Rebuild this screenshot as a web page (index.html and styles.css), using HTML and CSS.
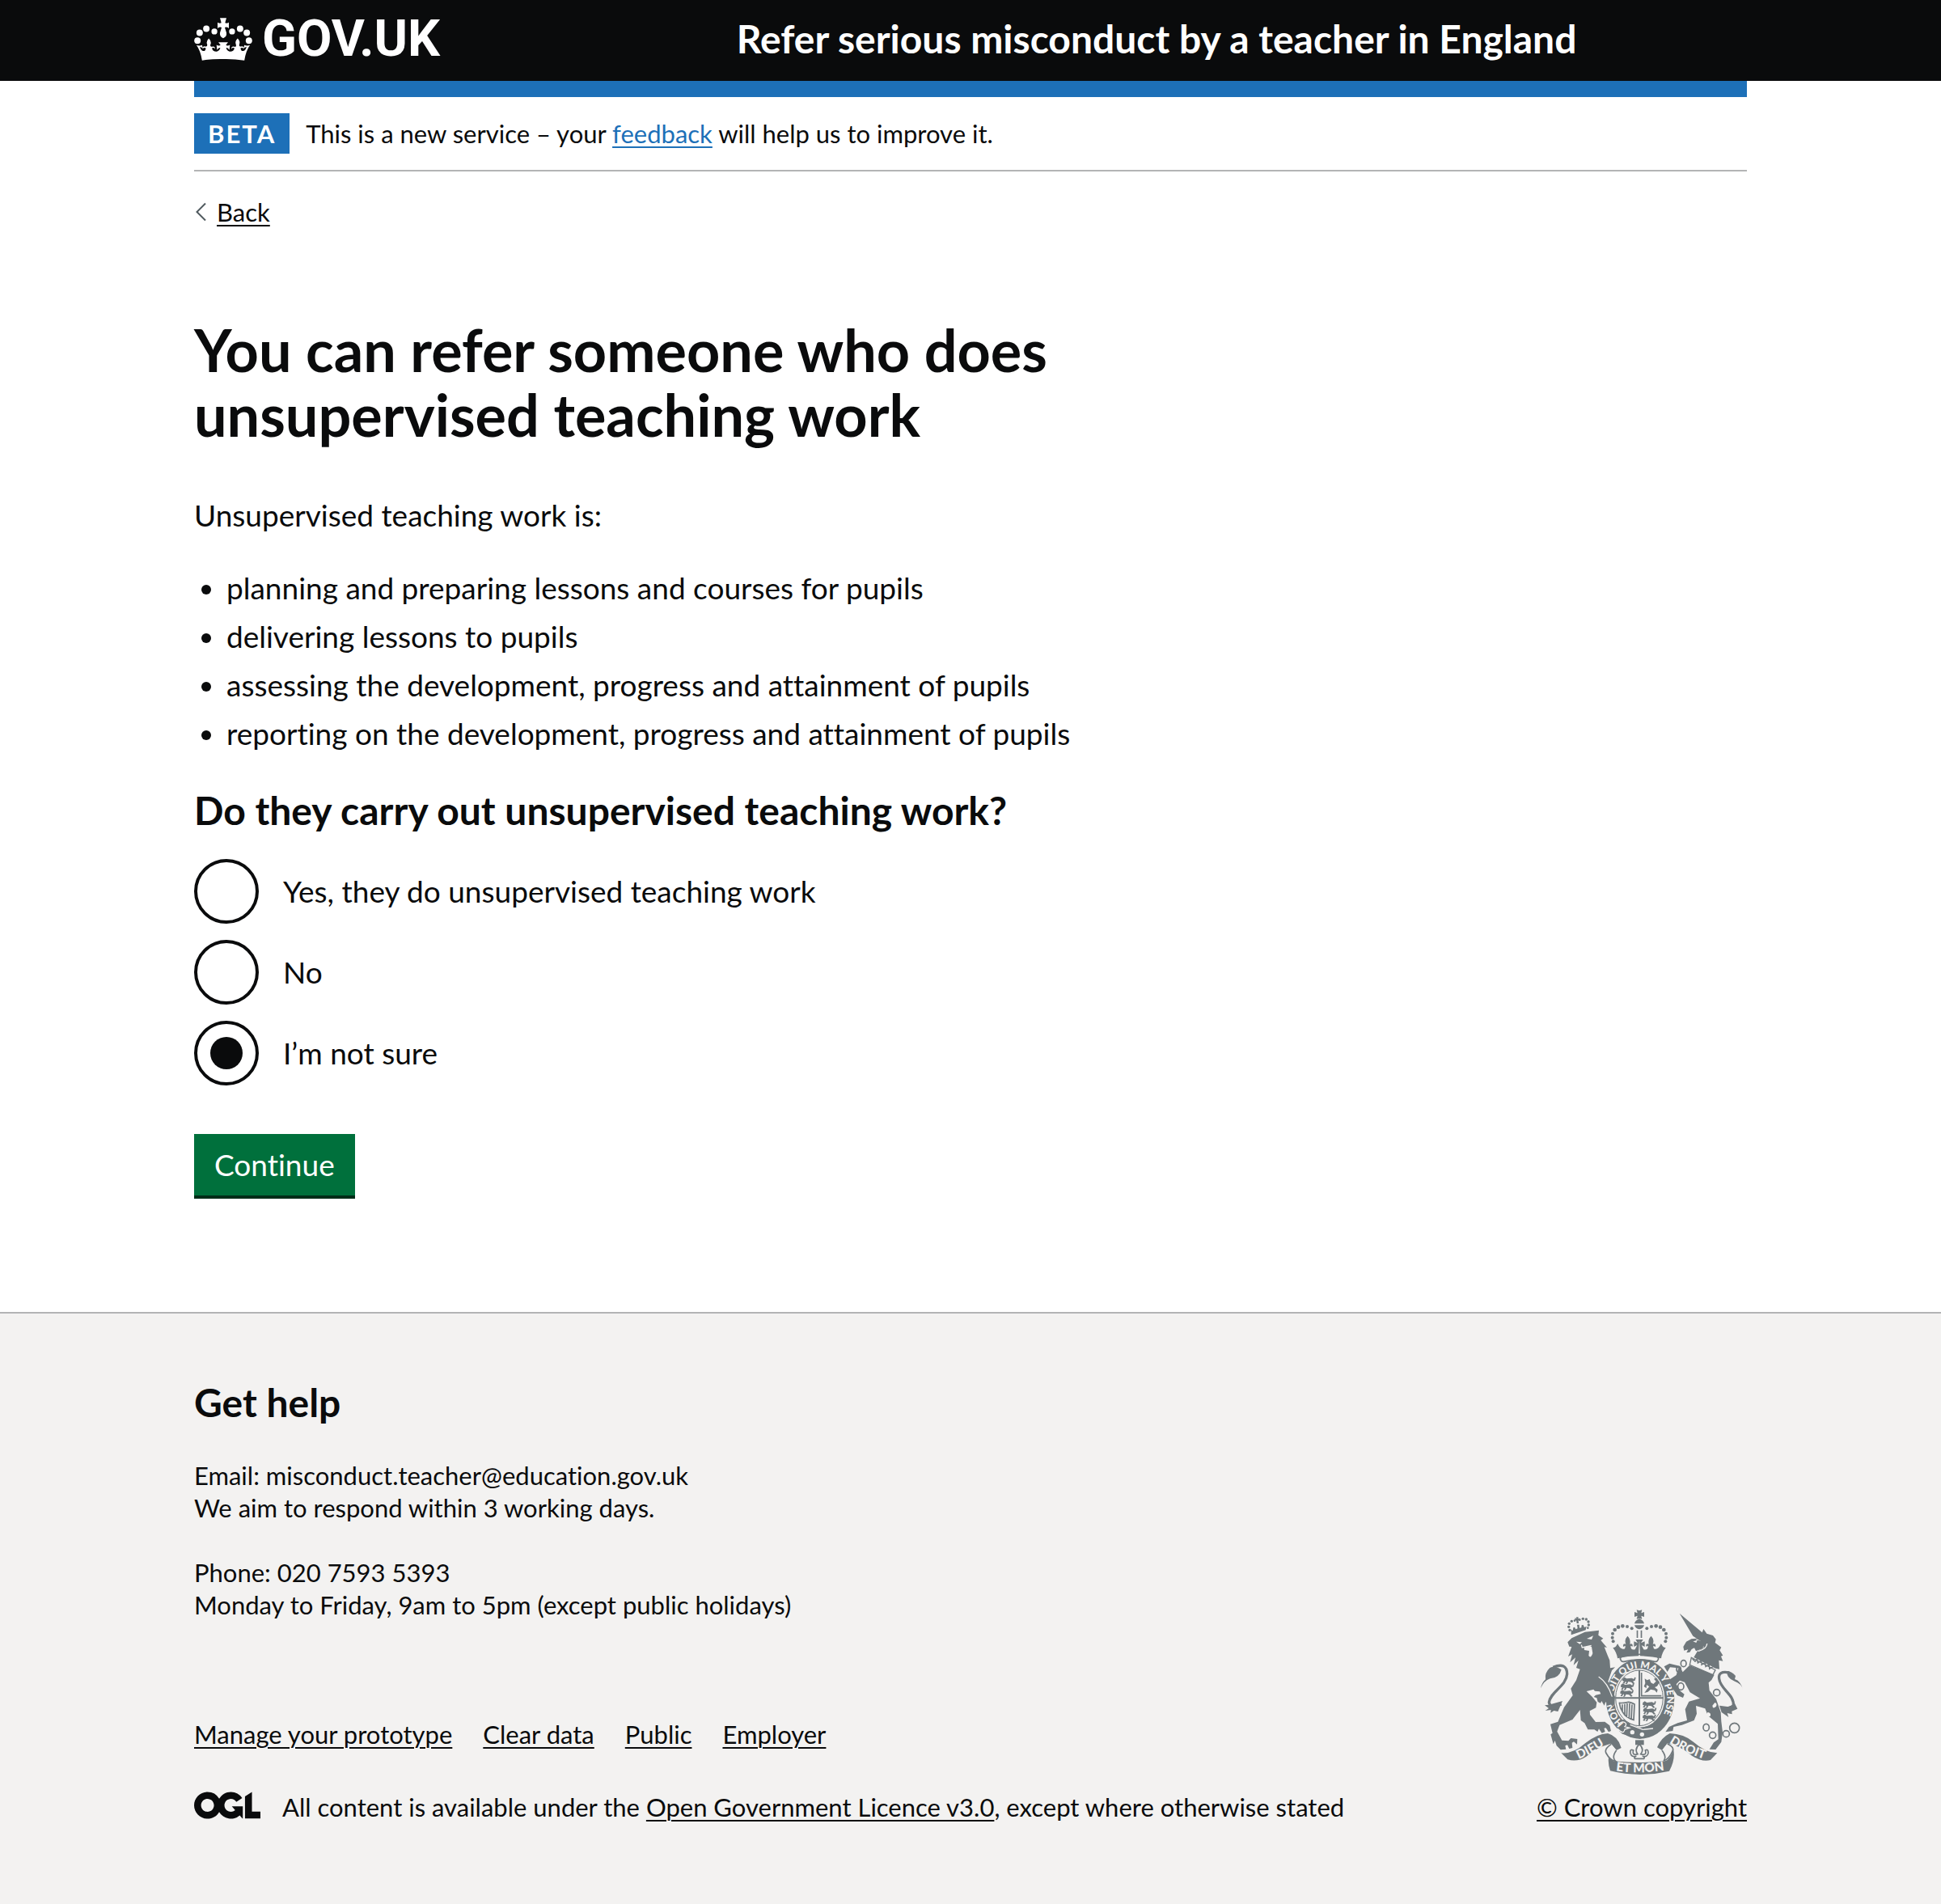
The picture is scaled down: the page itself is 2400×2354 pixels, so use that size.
FILE: index.html
```html
<!DOCTYPE html>
<html lang="en">
<head>
<meta charset="utf-8">
<meta name="viewport" content="width=device-width, initial-scale=1">
<title>Refer serious misconduct by a teacher in England</title>
<link rel="stylesheet" href="styles.css">
</head>
<body>
<header class="header">
  <div class="container header-row">
    <a class="logo" href="#">
      <svg class="logo-crown" viewBox="60 62 216 160" aria-hidden="true" fill="currentColor">
        <g id="crown-side">
          <circle cx="72" cy="147" r="12"/><circle cx="80" cy="118" r="12"/><circle cx="105" cy="103" r="12"/><circle cx="135" cy="113" r="11"/>
          <path d="M168 63H156L161 81Q154 84 147 79V101Q155 95 162 98L156 118Q154 133 168 138ZM168 153H150L158 164Q152 168 143 163L145 182Q150 173 157 174Q155 185 144 188Q129 189 126 175Q132 171 138 178Q137 166 126 170Q117 171 121 160Q125 150 114 139Q103 151 108 161Q110 171 101 169Q91 167 91 178Q97 171 103 175Q103 187 92 186Q83 182 81 170L92 175L89 164Q79 169 68 164Q83 184 89 221Q128 215 168 216Z"/>
        </g>
        <use href="#crown-side" transform="translate(336 0) scale(-1 1)"/>
      </svg>
      <span>GOV.UK</span>
    </a>
    <a class="service-name" href="#">Refer serious misconduct by a teacher in England</a>
  </div>
</header>

<div class="container">
  <div class="phase-banner">
    <strong class="tag">BETA</strong>
    <span>This is a new service – your <a class="link" href="#">feedback</a> will help us to improve it.</span>
  </div>
  <a class="back-link" href="#">
    <svg viewBox="0 0 14 24" aria-hidden="true"><path d="M12 1.500 1.500 12 12 22.500" fill="none" stroke="#505a5f" stroke-width="2"/></svg>
    <span>Back</span>
  </a>

  <main class="main">
    <h1 class="heading-xl">You can refer someone who does unsupervised teaching work</h1>
    <p class="body">Unsupervised teaching work is:</p>
    <ul class="list">
      <li>planning and preparing lessons and courses for pupils</li>
      <li>delivering lessons to pupils</li>
      <li>assessing the development, progress and attainment of pupils</li>
      <li>reporting on the development, progress and attainment of pupils</li>
    </ul>
    <form>
      <fieldset class="fieldset">
        <legend class="heading-m">Do they carry out unsupervised teaching work?</legend>
        <div class="radio"><input type="radio" name="unsupervised" id="answer-yes"><label for="answer-yes">Yes, they do unsupervised teaching work</label></div>
        <div class="radio"><input type="radio" name="unsupervised" id="answer-no"><label for="answer-no">No</label></div>
        <div class="radio"><input type="radio" name="unsupervised" id="answer-unsure" checked><label for="answer-unsure">I’m not sure</label></div>
      </fieldset>
      <button class="button" type="button">Continue</button>
    </form>
  </main>
</div>

<footer class="footer">
  <div class="container footer-row">
    <div class="footer-main">
      <h2 class="heading-m">Get help</h2>
      <p>Email: misconduct.teacher@education.gov.uk<br>We aim to respond within 3 working days.</p>
      <p>Phone: 020 7593 5393<br>Monday to Friday, 9am to 5pm (except public holidays)</p>
      <ul class="footer-links">
        <li><a href="#">Manage your prototype</a></li>
        <li><a href="#">Clear data</a></li>
        <li><a href="#">Public</a></li>
        <li><a href="#">Employer</a></li>
      </ul>
      <div class="licence">
        <svg viewBox="0 0 483.2 195.7" aria-hidden="true" fill="currentColor"><path d="M421.500 142.800V.1l-50.700 32.300v161.100h112.400v-50.700zm-122.300-9.600A47.120 47.120 0 0 1 221 97.800c0-26 21.100-47.100 47.100-47.100 16.700 0 31.400 8.700 39.700 21.800l42.700-27.200A97.630 97.630 0 0 0 268.100 0c-36.500 0-68.300 20.100-85.100 49.700A98 98 0 0 0 97.800 0C43.900 0 0 43.900 0 97.800s43.900 97.800 97.800 97.800c36.500 0 68.300-20.100 85.100-49.700a97.760 97.760 0 0 0 149.600 25.400l19.400 22.200h3v-87.800h-80l24.300 27.500zM97.800 145c-26 0-47.100-21.100-47.100-47.100s21.100-47.100 47.100-47.100 47.100 21.100 47.100 47.100S123.800 145 97.800 145"/></svg>
        <span>All content is available under the <a href="#">Open Government Licence v3.0</a>, except where otherwise stated</span>
      </div>
    </div>
    <a class="copyright" href="#">
      <svg class="arms" viewBox="42 30 750 612" aria-hidden="true">
        <defs>
          <path id="garter-path" d="M411 475A100 114 0 0 1 411 247A100 114 0 0 1 411 475"/>
          <path id="dieu-path" d="M183 585Q235 562 292 524"/>
          <path id="mon-path" d="M321 628Q408 640 500 626"/>
          <path id="droit-path" d="M519 524Q570 558 646 584"/>
          <g id="small-crown">
            <circle cx="150" cy="106" r="5"/><circle cx="146" cy="94" r="5"/><circle cx="148" cy="82" r="5"/><circle cx="157" cy="73" r="5"/><circle cx="168" cy="71" r="4"/><circle cx="187" cy="68" r="4"/><circle cx="199" cy="64" r="5"/><circle cx="211" cy="66" r="5"/><circle cx="219" cy="75" r="5"/><circle cx="220" cy="87" r="5"/><circle cx="217" cy="98" r="4"/>
            <path d="M170 60l5 4-1-6h8l-1 6 5-2 2 9-6-2 1 12h-7l-2-11-6 3zM155 104l6 5 2-12 5-2 4 8 7-3-2-14h8l1 12 7-1 1-9 6-1 4 9 8-4-3 14-54 18z"/>
          </g>
          <g id="crown-half">
            <circle cx="380" cy="100" r="6"/><circle cx="363" cy="93" r="6"/><circle cx="346" cy="91" r="7"/><circle cx="330" cy="95" r="7"/><circle cx="317" cy="105" r="7"/><circle cx="309" cy="119" r="6"/><circle cx="308" cy="134" r="6"/><circle cx="311" cy="148" r="6"/>
            <path d="M408 34l-10-3 3 12-11-4v18l11-4-3 12 10-2zM408 64q-16 6-18 18h18zM390 88h18v15q-14-2-18-15zM398 107h5v28h-5zM408 141h-14l8 13-14-6v20l12-6-8 16q-17 4-16-14l7 3q2-13-10-9 4-18-9-30-13 14-6 30-12-4-10 10l8-4q1 17-13 11-10-4-15-18l-4 4q-2 8-14 11 14 17 17 39 38-9 78-9z"/>
            <path d="M408 196q-34 0-66 8-8 6-3 13 4 8 12 6 27-7 57-7" class="line"/>
          </g>
          <g id="walking-lion">
            <path d="M4 7l7-5 8 5 19-2 8 4 2-7 5 1-3 11-8 3 7 8-6 2-7-7-11-2-5 9-7 0 5-5-3-5-5 9-6-2 5-7-6-2z"/>
          </g>
        </defs>

        <g class="ink">
          <use href="#crown-half"/><use href="#crown-half" transform="translate(816 0) scale(-1 1)"/>
        </g>

        <!-- garter and quartered shield -->
        <ellipse class="ink" cx="411" cy="361" rx="127" ry="148"/>
        <ellipse class="paper" cx="408" cy="358" rx="94" ry="109"/>
        <ellipse class="ring" cx="408" cy="358" rx="88" ry="103"/>
        <path class="rule" d="M408 255V461M319 358H497"/>
        <g class="ink">
          <use href="#walking-lion" transform="translate(342 279)"/><use href="#walking-lion" transform="translate(336 302)"/><use href="#walking-lion" transform="translate(334 326)"/>
          <use href="#walking-lion" transform="translate(417 368)"/><use href="#walking-lion" transform="translate(419 392)"/><use href="#walking-lion" transform="translate(417 417)"/>
          <path d="M428 286l9 6 9-4 5 13 9 5 10-10-8-9 9-4 12 16-9 15-9 4 11 9-3 11-8-9-15-3-10 9-13 4 10-15 8-8-10-7-1 13-9-7 5-12z"/>
        </g>
        <path class="line" d="M416 264v86h74"/>
        <path class="line" d="M332 376q22 2 36-3 8 0 22 8l-3 58q-29-7-41-29-10-16-12-33M345 382v25M354 380v42M363 378l-2 51M372 378l-2 57M381 382l-3 54"/>
        <path class="ink" d="M335 443l16-6 13 11 45 21 75-18 12 9-21 29-65 20-65-18-12-11 7-15z"/>
        <circle class="paper" cx="382" cy="485" r="8"/><circle class="paper" cx="418" cy="493" r="8"/>
        <path class="paper-line" d="M328 458q14-15 25-10t1 16l17 5-17 5q-3 16-15 8l-12-10M374 457l47 18 38-4"/>
        <text class="motto garter"><textPath href="#garter-path" startOffset="66">HONI SOIT QUI MAL Y PENSE</textPath></text>

        <!-- lion -->
        <g class="ink">
          <use href="#small-crown"/>
          <path d="M142 151L157 136 206 113 258 107 256 125 274 137 265 144 288 171 278 169 291 202 298 218 300 247 318 244 306 256 292 296 309 331 318 354 316 380 308 389 300 378 292 386 283 372 278 386 268 369 264 377 254 372 250 358 239 354 246 347 265 343 261 334 243 332 238 326 212 333 233 353 250 374 247 394 224 406 225 420 246 447 280 446 298 460 303 480 294 484 284 469 277 470 281 483 269 488 258 472 253 483 241 475 217 475 205 451 191 441 188 402 160 438 112 458 103 482 121 515 145 517 154 507 178 510 177 530 165 520 158 524 160 543 148 546 141 532 133 535 136 548 116 550 101 535 95 516 89 529 79 493 86 488 78 455 106 446 129 392 161 348 154 323 174 292 188 251 174 246 182 219 164 236 171 208 151 226 159 196 144 204 157 168 148 167z"/>
          <path d="M42 322Q46 302 60 289Q56 265 76 246Q96 236 119 253Q111 284 77 286Q54 294 42 322Z"/>
        </g>
        <path class="tail" d="M88 244Q139 224 140 269C137 315 79 333 73 374Q76 398 119 381"/>
        <path class="ink" d="M57 385l15-2 51-14-17 39-15-3-12 8 1-11-21 3 13-9z"/>
        <path class="paper" d="M174 149l21 2-8 7zM213 138l24-11-6 14zM203 172q17-12 28-4l4 24q-7 21-15 9l2-18-18-3z"/>
        <path class="paper-line" d="M257 279Q291 302 307 353M193 161l3 10 34-8"/>

        <!-- unicorn -->
        <g class="ink">
          <path d="M557 44L641 115 646 102 658 119 681 126 692 140 689 153 712 170 706 181 718 200 711 203 718 221 703 218 705 251 690 248 610 207 624 184 647 172 642 150 621 139 605 157 621 167 602 177 595 188 583 190 589 178 574 182 571 168 582 149 601 139 621 137 607 128z"/>
          <path d="M605 140l42 8-3 26-26 10-8-16-12-12z"/>
          <path d="M594 237L686 272 676 291 665 301 668 330 693 362 710 411 712 445 717 486 712 521 691 549 668 548 684 523 701 511 699 454 662 423 652 397 618 387 621 416 611 441 566 458 535 465 532 480 505 484 518 465 550 451 585 441 578 400 592 371 633 359 596 337 576 299 558 293 545 307 560 332 575 344 570 357 549 348 527 316 517 292 545 273 553 247 522 244 512 261 500 241 520 230 557 239 569 262z"/>
          <path d="M792 327Q787 304 762 296Q729 284 734 258Q751 260 765 276L762 288Q784 294 792 327ZM705 386l35 5 22-13 10 20-21 9 1 11-18-4 5 15-26-18z"/>
        </g>
        <path class="tail" d="M741 264Q699 256 704 287C709 328 762 344 757 389L729 398"/>
        <path class="collar" d="M601 208L690 254 681 272 595 235zM605 213l10 10 7-10 3 15 13-9 1 16 13-9 2 16 13-8 1 16 13-8"/>
        <path class="paper" d="M607 148l16-4-4 9zM688 375q10 2 5 14-13 12-14-3zM661 411q15 2 10 14-13 7-14-6z"/>
        <path class="paper-line" d="M659 156q0 19-33 29"/>
        <g class="chain"><ellipse cx="572" cy="230" rx="10" ry="12"/><ellipse cx="554" cy="252" rx="8" ry="10"/><ellipse cx="562" cy="315" rx="11" ry="13"/><circle cx="695" cy="338" r="12"/><ellipse cx="656" cy="467" rx="11" ry="13"/><circle cx="680" cy="496" r="12"/><circle cx="730" cy="491" r="12"/><circle cx="761" cy="469" r="18"/></g>

        <!-- motto ribbon -->
        <g class="ink">
          <path d="M118 562Q163 566 207 526Q250 491 291 489Q330 500 341 543L323 552 302 527Q247 542 211 575Q178 597 142 586Z"/>
          <path d="M697 562Q655 562 607 520Q573 491 521 489Q488 506 474 541L492 552 512 526Q554 532 603 572Q642 597 672 588Z"/>
          <path d="M281 556Q295 585 312 592Q408 602 503 592Q524 586 534 546Q543 586 519 629Q408 655 300 628Q291 601 294 579Z"/>
          <path d="M393 514h32v18h-32z"/>
        </g>
        <path class="ribbon" d="M323 552Q304 578 320 592Q300 591 284 561Q278 546 304 529M492 552Q511 578 498 591Q518 585 531 555Q539 541 512 527"/>
        <path class="fleur" d="M408 529q-20 19-6 37-22 7-16-14-14-7-11 11 5 16 22 10-11 5-5 10h33q5-6-6-10 18 6 22-10 1-18-11-11 7 21-17 14 15-18-5-37z"/>
        <text class="motto scroll"><textPath href="#dieu-path">DIEU</textPath></text>
        <text class="motto scroll"><textPath href="#mon-path">ET MON</textPath></text>
        <text class="motto scroll"><textPath href="#droit-path">DROIT</textPath></text>
      </svg>
      <span>© Crown copyright</span>
    </a>
  </div>
</footer>
</body>
</html>
```
FILE: styles.css
```css
* { box-sizing: border-box; }

body {
  margin: 0;
  min-height: 100vh;
  display: flex;
  flex-direction: column;
  background: #fff;
  color: #0a0b0c;
  font-family: Lato, "Liberation Sans", sans-serif;
  font-size: 31px;
  line-height: 40px;
  font-variant-ligatures: none;
}

h1, h2, p, ul, legend, fieldset { margin: 0; padding: 0; }
ul { list-style: none; }
a { color: inherit; text-decoration-thickness: 2px; text-underline-offset: 4px; }

.container {
  width: 80%;
  max-width: 1920px;
  margin: 0 auto;
}

/* Header */
.header { background: #0a0b0c; color: #fff; }
.header-row {
  display: grid;
  grid-template-columns: 1fr 2fr;
  column-gap: 46px;
  align-items: center;
  min-height: 120px;
  margin-bottom: -20px;
  padding-bottom: 4px;
  border-bottom: 20px solid #1d70b8;
}
.header a { text-decoration: none; }
.logo {
  display: flex;
  align-items: center;
  gap: 12px;
  font-family: Roboto, sans-serif;
  font-size: 63px;
  font-weight: 700;
  line-height: 64px;
}
.logo-crown { width: 72px; height: 53px; }
.service-name { font-size: 48px; font-weight: 700; line-height: 60px; }

/* Phase banner and back link */
.phase-banner {
  display: flex;
  align-items: center;
  gap: 20px;
  margin-top: 20px;
  padding: 20px 0;
  border-bottom: 2px solid #b3b4b5;
}
.tag {
  padding: 5px 17px;
  background: #1d70b8;
  color: #fff;
  letter-spacing: 2px;
}
.link { color: #1d70b8; }
.back-link {
  display: inline-flex;
  align-items: center;
  gap: 12px;
  margin-top: 30px;
  text-decoration: none;
}
.back-link svg { width: 14px; height: 24px; margin-left: 2px; }
.back-link span { text-decoration: underline 2px; text-underline-offset: 4px; }

/* Content */
.main {
  max-width: 1260px;
  padding: 110px 0 140px;
  font-size: 37px;
  line-height: 50px;
}
.heading-xl { max-width: 1160px; margin-bottom: 60px; font-size: 72px; line-height: 80px; }
.heading-m { font-size: 48px; font-weight: 700; line-height: 60px; }
.body { margin-bottom: 40px; }
.list {
  display: grid;
  gap: 10px;
  margin-bottom: 40px;
  padding-left: 40px;
  list-style: disc;
}
.fieldset { border: 0; min-width: 0; }
.fieldset .heading-m { margin-bottom: 30px; }
.radio { display: flex; align-items: center; gap: 30px; margin-bottom: 20px; }
.radio input {
  appearance: none;
  display: grid;
  place-items: center;
  width: 80px;
  height: 80px;
  margin: 0;
  border: 4px solid #0a0b0c;
  border-radius: 50%;
}
.radio input:checked::before {
  content: "";
  width: 40px;
  height: 40px;
  border-radius: 50%;
  background: #0a0b0c;
}
.button {
  display: block;
  margin: 40px 0 4px;
  padding: 13px 25px;
  border: 0;
  background: #00703c;
  box-shadow: 0 4px 0 #002d18;
  color: #fff;
  font: inherit;
}

/* Footer */
.footer {
  flex: 1;
  padding: 80px 0 100px;
  border-top: 2px solid #b3b4b5;
  background: #f3f2f1;
}
.footer-row { display: flex; justify-content: space-between; align-items: flex-end; }
.footer-main .heading-m { margin-bottom: 40px; }
.footer-main p { margin-bottom: 40px; }
.footer-links { display: flex; flex-wrap: wrap; gap: 38px; padding-top: 80px; margin-bottom: 50px; }
.licence { display: flex; align-items: center; gap: 27px; }
.licence svg { width: 82px; height: 34px; margin-bottom: 4px; }
.copyright { display: flex; flex-direction: column; align-items: center; gap: 20px; }
.arms { width: 250px; height: 204px; }

/* Royal arms drawing */
.ink { fill: #6f777b; }
.ink .line, .line { fill: none; stroke: #6f777b; stroke-width: 5; }
.paper { fill: #f3f2f1; }
.ring { fill: none; stroke: #6f777b; stroke-width: 3; }
.rule { fill: none; stroke: #6f777b; stroke-width: 6; }
.paper-line { fill: none; stroke: #f3f2f1; stroke-width: 4; }
.tail { fill: none; stroke: #6f777b; stroke-width: 10; }
.collar { fill: #f3f2f1; stroke: #6f777b; stroke-width: 4; }
.chain { fill: none; stroke: #6f777b; stroke-width: 5; }
.ribbon, .fleur { fill: #f3f2f1; stroke: #6f777b; stroke-width: 5; }
.motto { fill: #f3f2f1; font-weight: 900; }
.garter { font-size: 36px; }
.scroll { font-size: 46px; }
```
